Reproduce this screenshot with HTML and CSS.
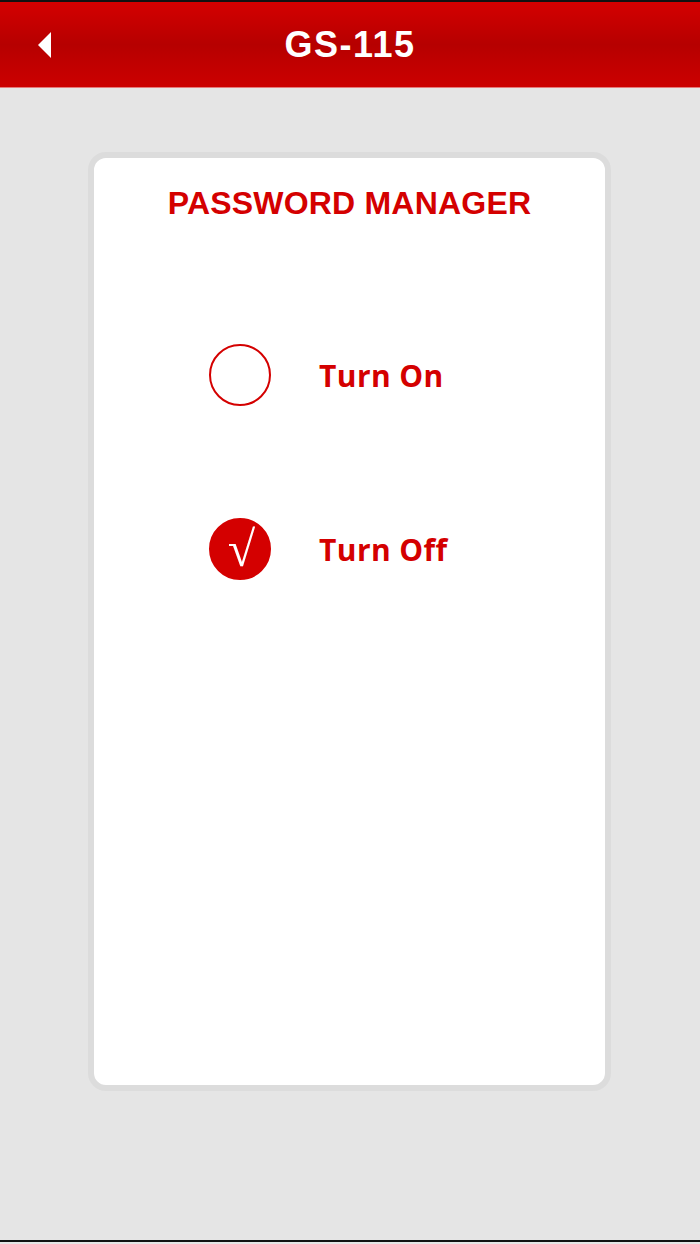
FILE: index.html
```html
<!DOCTYPE html>
<html lang="en">
<head>
    <meta charset="UTF-8">
    <meta name="viewport" content="width=device-width, initial-scale=1.0">
    <title>GS-115 - Password Manager</title>
    <link rel="stylesheet" href="styles.css">
</head>
<body>
    <header class="topbar">
        <a class="back" href="#">
            <svg width="16" height="28" viewBox="0 0 16 28">
                <polygon points="2,13 15,0 15,26" fill="#fff"/>
            </svg>
        </a>
        <h1>GS-115</h1>
    </header>
    <main class="content">
        <div class="card">
            <h2>PASSWORD MANAGER</h2>
            <div class="options">
                <label class="option">
                    <span class="radio"></span>
                    <span class="label">Turn On</span>
                </label>
                <label class="option">
                    <span class="radio checked">&radic;</span>
                    <span class="label">Turn Off</span>
                </label>
            </div>
        </div>
    </main>
</body>
</html>
```

FILE: styles.css
```css
html, body {
    margin: 0;
    padding: 0;
}
body {
    font-family: "Liberation Sans", Arial, sans-serif;
    background-color: #e5e5e5;
    height: 1242px;
    border-top: 2px solid #111;
    border-bottom: 2px solid #111;
    box-sizing: border-box;
    overflow: hidden;
}
.topbar {
    position: relative;
    height: 85px;
    background: linear-gradient(#d40000, #b60000 50%, #cc0000);
    border-bottom: 1px solid #e57a7a;
    display: flex;
    align-items: center;
    justify-content: center;
}
.topbar h1 {
    margin: 0;
    color: white;
    font-size: 36px;
    letter-spacing: 1.5px;
    font-weight: bold;
}
.back {
    position: absolute;
    left: 36px;
    top: 30px;
    display: block;
    line-height: 0;
}
.content {
    padding-top: 64px;
}
.card {
    margin: 0 89px 0 88px;
    height: 939px;
    box-sizing: border-box;
    border: 6px solid #dcdcdc;
    border-radius: 18px;
    background: white;
}
.card h2 {
    margin: 0;
    padding-top: 27px;
    text-align: center;
    color: #d40000;
    font-size: 32px;
    line-height: 36px;
    letter-spacing: 0.2px;
    font-weight: bold;
}
.options {
    display: flex;
    flex-direction: column;
    gap: 112px;
    padding: 123px 0 0 115px;
}
.option {
    display: flex;
    align-items: center;
    gap: 48px;
}
.radio {
    width: 62px;
    height: 62px;
    box-sizing: border-box;
    border: 2.5px solid #d40000;
    border-radius: 50%;
    display: flex;
    align-items: center;
    justify-content: center;
}
.radio.checked {
    background: #d40000;
    color: white;
    font-family: "Liberation Serif", "Times New Roman", serif;
    font-size: 50px;
    line-height: 1;
    padding-left: 3px;
}
.label {
    color: #d40000;
    font-family: "Open Sans", sans-serif;
    font-size: 30px;
    letter-spacing: 0.4px;
    font-weight: bold;
}
```
